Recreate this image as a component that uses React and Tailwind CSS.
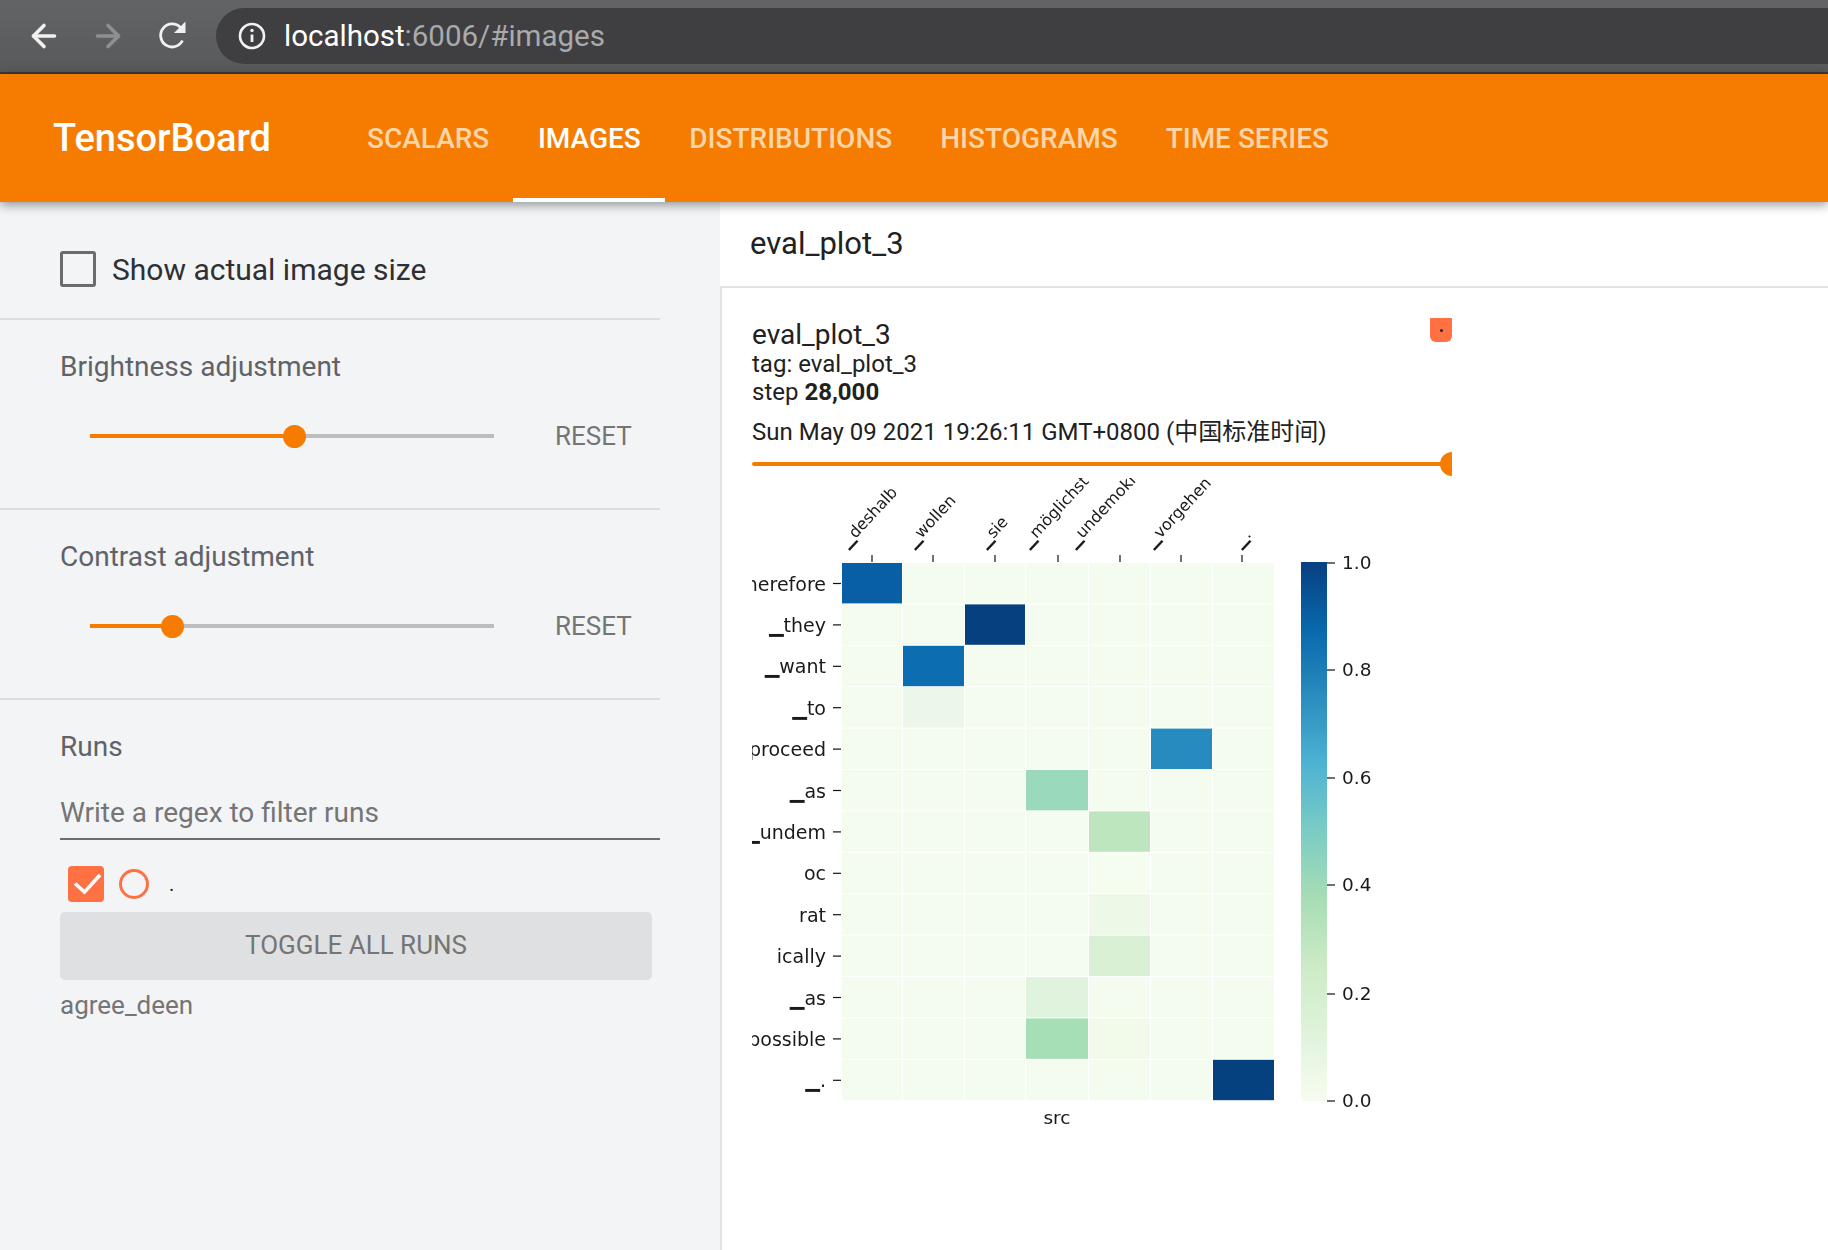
import React from 'react';
import { ArrowLeft, ArrowRight } from 'lucide-react';

const FONT = { fontFamily: 'Roboto, sans-serif' };

const TABS = ['SCALARS', 'IMAGES', 'DISTRIBUTIONS', 'HISTOGRAMS', 'TIME SERIES'];

const BASE_CELL = '#f4fcef';
const HOT_CELLS = {
  '0-0': '#085fa5',
  '1-2': '#07407f',
  '2-1': '#0c6db0',
  '3-1': '#ecf7ea',
  '4-5': '#278bbf',
  '5-3': '#9bd9bb',
  '6-4': '#bde6bf',
  '7-4': '#f5fdf1',
  '8-4': '#eef8e6',
  '9-4': '#d9f0d5',
  '10-3': '#dff3dd',
  '11-3': '#a6dfb6',
  '11-4': '#f2faea',
  '12-6': '#06417f',
};

const COL_X = [842, 903, 965, 1026, 1089, 1151, 1213, 1275];
const ROW_LABELS = ['▁therefore', '▁they', '▁want', '▁to', '▁proceed', '▁as', '▁undem', 'oc', 'rat', 'ically', '▁as', '▁possible', '▁.'];
const COL_LABELS = [
  ['▁deshalb', 847],
  ['▁wollen', 913],
  ['▁sie', 985],
  ['▁möglichst', 1028],
  ['▁undemokratisch', 1074],
  ['▁vorgehen', 1152],
  ['▁.', 1240],
];
const COL_TICKS = [872, 933, 995, 1058, 1120, 1181, 1242];
const BAR_TICKS = [['1.0', 563], ['0.8', 670], ['0.6', 778], ['0.4', 885], ['0.2', 994], ['0.0', 1101]];

function Heatmap() {
  const rowH = 41.4;
  return (
    <svg viewBox="752 478 700 660" className="block w-[700px] h-[660px] blur-[0.4px]" style={{ fontFamily: '"DejaVu Sans", sans-serif' }}>
      <defs>
        <linearGradient id="gnbu" x1="0" y1="1" x2="0" y2="0">
          <stop offset="0" stopColor="#f7fcf0" />
          <stop offset="0.125" stopColor="#e0f3db" />
          <stop offset="0.25" stopColor="#ccebc5" />
          <stop offset="0.375" stopColor="#a8ddb5" />
          <stop offset="0.5" stopColor="#7bccc4" />
          <stop offset="0.625" stopColor="#4eb3d3" />
          <stop offset="0.75" stopColor="#2b8cbe" />
          <stop offset="0.875" stopColor="#0868ac" />
          <stop offset="1" stopColor="#084081" />
        </linearGradient>
      </defs>

      {ROW_LABELS.map((label, r) => (
        <g key={r}>
          {COL_X.slice(0, 7).map((x, c) => (
            <rect
              key={c}
              x={x}
              y={563 + r * rowH}
              width={COL_X[c + 1] - x - 1}
              height={rowH - 1}
              fill={HOT_CELLS[`${r}-${c}`] || BASE_CELL}
            />
          ))}
          <line x1="833" x2="841" y1={583.5 + r * rowH} y2={583.5 + r * rowH} stroke="#111" strokeWidth="1.2" />
          <text x="826" y={590.5 + r * rowH} textAnchor="end" fontSize="19" fill="#1a1a1a">{label}</text>
        </g>
      ))}

      {COL_TICKS.map((x) => (
        <line key={x} x1={x} x2={x} y1="555" y2="562" stroke="#111" strokeWidth="1.2" />
      ))}
      {COL_LABELS.map(([label, x]) => (
        <text key={label} x={x} y="548" fontSize="16" fill="#1a1a1a" transform={`rotate(-47 ${x} 548)`}>{label}</text>
      ))}

      <text x="1057" y="1124" textAnchor="middle" fontSize="18.5" fill="#1a1a1a">src</text>

      <rect x="1301" y="562" width="26" height="539" fill="url(#gnbu)" />
      {BAR_TICKS.map(([label, y]) => (
        <g key={label}>
          <line x1="1327" x2="1335" y1={y} y2={y} stroke="#111" strokeWidth="1.2" />
          <text x="1342" y={y + 6} fontSize="18.5" fill="#1a1a1a">{label}</text>
        </g>
      ))}
    </svg>
  );
}

function Slider({ fill, rest }) {
  return (
    <div className="flex items-center">
      <div className={`h-[4px] bg-[#f57c00] ${fill}`} />
      <div className="w-[23px] h-[23px] rounded-full bg-[#f57c00] shrink-0 -mx-[11px] relative" />
      <div className={`h-[4px] bg-[#bdbdbd] ${rest}`} />
    </div>
  );
}

function SliderSection({ title, fill, rest }) {
  return (
    <div className="h-[190px] w-[660px] border-b-2 border-[#dcdddf] pt-[29px] pl-[60px]">
      <div className="text-[28px] leading-[36px] text-[#5f6368]">{title}</div>
      <div className="flex items-center mt-[33px] h-[36px]">
        <div className="ml-[30px] w-[404px]">
          <Slider fill={fill} rest={rest} />
        </div>
        <div className="ml-[61px] text-[26px] text-[#757575]">RESET</div>
      </div>
    </div>
  );
}

function Sidebar() {
  return (
    <div className="w-[720px] shrink-0 bg-[#f3f4f6] h-full">
      <div className="h-[118px] w-[660px] border-b-2 border-[#dcdddf] flex items-center pl-[60px] pt-[18px]">
        <div className="w-[36px] h-[36px] rounded-[3px] border-[3px] border-[#6a6b6d]" />
        <div className="ml-[16px] text-[30px] text-[#2f3033]">Show actual image size</div>
      </div>
      <SliderSection title="Brightness adjustment" fill="w-[204px]" rest="w-[200px]" />
      <SliderSection title="Contrast adjustment" fill="w-[82px]" rest="w-[322px]" />
      <div className="pl-[60px] pt-[29px]">
        <div className="text-[28px] leading-[36px] text-[#5f6368]">Runs</div>
        <div className="w-[600px] mt-[30px] h-[45px] border-b-2 border-[#6b6c6e] text-[28px] leading-[36px] text-[#757575]">
          Write a regex to filter runs
        </div>
        <div className="flex items-center h-[36px] mt-[26px] ml-[8px]">
          <div className="w-[36px] h-[36px] rounded-[4px] bg-[#ff7043]">
            <svg width="36" height="36" viewBox="0 0 36 36" fill="none">
              <path d="M7 17.5 L16.5 26 L32 9" stroke="#fff" strokeWidth="3.6" />
            </svg>
          </div>
          <div className="ml-[15px] w-[30px] h-[30px] rounded-full border-[3px] border-[#ff7043]" />
          <div className="ml-[20px] text-[20px] text-[#222]">.</div>
        </div>
        <div className="w-[592px] h-[68px] mt-[10px] pb-[2px] rounded-[5px] bg-[#dfe0e2] flex items-center justify-center text-[26px] text-[#757575]">
          TOGGLE ALL RUNS
        </div>
        <div className="mt-[6px] text-[26px] text-[#757575]">agree_deen</div>
      </div>
    </div>
  );
}

function ImageCard() {
  return (
    <div className="flex-1 border-l-2 border-[#e3e3e3] pl-[30px] pt-[31px]">
      <div className="w-[700px] relative">
        <div className="absolute right-0 top-[-1px] w-[22px] h-[24px] bg-[#ff7043] rounded-b-[6px] rounded-t-[1px] flex items-center justify-center">
          <div className="w-[3px] h-[3px] rounded-full bg-[#222]" />
        </div>
        <div className="text-[28px] leading-[32px] text-[#212121]">eval_plot_3</div>
        <div className="text-[24px] leading-[28px] text-[#212121] -mt-[1px]">tag: eval_plot_3</div>
        <div className="text-[24px] leading-[28px] text-[#212121]">
          step <span className="font-bold">28,000</span>
        </div>
        <div className="text-[24px] leading-[30px] text-[#212121] mt-[11px]" style={{ fontFamily: 'Roboto, "Noto Sans CJK SC", sans-serif' }}>
          Sun May 09 2021 19:26:11 GMT+0800 (中国标准时间)
        </div>
        <div className="h-[24px] mt-[5px] flex items-center overflow-hidden">
          <div className="flex-1 h-[4px] bg-[#f57c00] rounded-l-full" />
          <div className="w-[24px] h-[24px] rounded-full bg-[#f57c00] shrink-0 -ml-[12px] -mr-[12px]" />
        </div>
        <div className="mt-[2px]">
          <Heatmap />
        </div>
      </div>
    </div>
  );
}

export default function App() {
  return (
    <div className="w-[1828px] h-[1250px] overflow-hidden flex flex-col bg-white" style={FONT}>
      {/* Browser toolbar */}
      <div className="h-[74px] shrink-0 border-b-2 border-[#38393b] bg-gradient-to-b from-[#636466] to-[#58595b] flex items-center relative">
        <ArrowLeft size={36} strokeWidth={2.4} className="text-[#f1f1f1] ml-[26px]" />
        <ArrowRight size={36} strokeWidth={2.4} className="text-[#8e8f91] ml-[28px]" />
        <svg width="34" height="34" viewBox="0 0 34 34" fill="none" className="ml-[30px]">
          <path d="M26.5 21.5 A11.5 11.5 0 1 1 24.5 8.5" stroke="#f1f1f1" strokeWidth="2.8" />
          <path d="M29.5 2.5 V14 H18 Z" fill="#f1f1f1" />
        </svg>
        <div className="ml-[26px] flex-1 h-[56px] rounded-l-[28px] bg-[#3f3f41] flex items-center pl-[22px]">
          <svg width="28" height="28" viewBox="0 0 28 28" fill="none">
            <circle cx="14" cy="14" r="12" stroke="#f1f1f1" strokeWidth="2.6" />
            <path d="M14 12.5 V20" stroke="#f1f1f1" strokeWidth="2.8" />
            <circle cx="14" cy="8.5" r="1.7" fill="#f1f1f1" />
          </svg>
          <div className="ml-[18px] text-[29.5px] text-white pt-[1px]">
            localhost<span className="text-[#a9aaab]">:6006/#images</span>
          </div>
        </div>
      </div>

      {/* TensorBoard header */}
      <div className="h-[128px] shrink-0 bg-[#f57c00] flex items-stretch relative z-10 shadow-[0_3px_10px_rgba(0,0,0,0.4)]">
        <div className="ml-[53px] w-[290px] flex items-center text-[38px] font-medium text-white">TensorBoard</div>
        <div className="flex">
          {TABS.map((tab) => (
            <div
              key={tab}
              className={
                tab === 'IMAGES'
                  ? 'w-[152px] flex items-center justify-center text-[28px] font-medium text-white border-b-4 border-white pt-[6px]'
                  : 'px-[24px] flex items-center text-[28px] font-medium text-[#fdd5a8] border-b-4 border-transparent pt-[6px]'
              }
            >
              {tab}
            </div>
          ))}
        </div>
      </div>

      <div className="flex-1 flex min-h-0">
        <Sidebar />
        <div className="flex-1 flex flex-col min-w-0">
          <div className="h-[86px] shrink-0 border-b-2 border-[#e3e3e3] pl-[30px] flex items-center pt-[1px] text-[31px] text-[#212121]">
            eval_plot_3
          </div>
          <ImageCard />
        </div>
      </div>
    </div>
  );
}
